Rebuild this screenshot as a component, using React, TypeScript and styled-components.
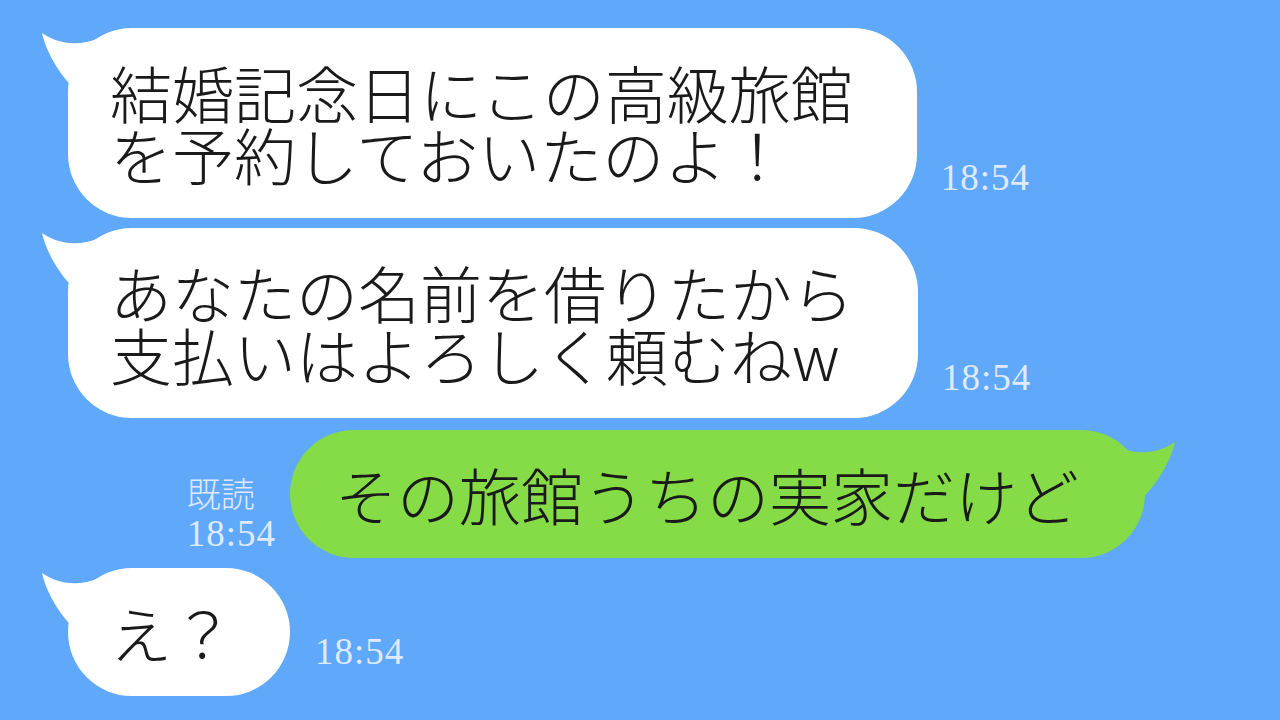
import styled, { createGlobalStyle } from "styled-components";

const GlobalStyle = createGlobalStyle`
  html, body {
    margin: 0;
    padding: 0;
    background: #5fa8fa;
  }
  body {
    font-family: "Noto Sans CJK JP", "Noto Sans", sans-serif;
  }
`;

const Screen = styled.div`
  width: 1280px;
  height: 720px;
  overflow: hidden;
  background: #5fa8fa;
  display: flex;
  flex-direction: column;
  padding-top: 28px;
  box-sizing: border-box;
`;

const Row = styled.div<{ $mine?: boolean; $gap: number }>`
  display: flex;
  align-items: flex-end;
  justify-content: ${({ $mine }) => ($mine ? "flex-end" : "flex-start")};
  padding: ${({ $mine }) => ($mine ? "0 135px 0 0" : "0 0 0 68px")};
  margin-bottom: ${({ $gap }) => $gap}px;
`;

const Bubble = styled.div<{ $mine?: boolean; $right: number }>`
  position: relative;
  background: ${({ $mine }) => ($mine ? "#86dc46" : "#ffffff")};
  color: #1a1a1a;
  border-radius: 64px;
  padding: 33px ${({ $right }) => $right}px 33px ${({ $mine }) => ($mine ? 45 : 42)}px;
  font-family: "Noto Sans CJK JP", "Noto Sans", sans-serif;
  font-weight: 300;
  font-size: 62px;
  line-height: 62px;
  white-space: pre;
`;

const Tail = styled.svg<{ $mine?: boolean }>`
  position: absolute;
  width: 70px;
  height: 80px;
  ${({ $mine }) =>
    $mine
      ? "top: 7px; right: -34px; transform: scaleX(-1);"
      : "top: 0; left: -30px;"}
`;

const Time = styled.div<{ $bottom: number; $left: number }>`
  font-family: "Liberation Serif", "DejaVu Serif", serif;
  font-size: 37px;
  line-height: 37px;
  letter-spacing: 1px;
  color: #dfeaff;
  margin: 0 0 ${({ $bottom }) => $bottom}px ${({ $left }) => $left}px;
`;

const Meta = styled.div`
  display: flex;
  flex-direction: column;
  align-items: flex-start;
  gap: 4px;
  margin: 0 14px 6px 0;
`;

const Read = styled.div`
  font-family: "Noto Sans CJK JP", sans-serif;
  font-size: 34px;
  line-height: 36px;
  color: #dfeaff;
  font-weight: 300;
`;

const MetaTime = styled.div`
  font-family: "Liberation Serif", "DejaVu Serif", serif;
  font-size: 37px;
  line-height: 37px;
  letter-spacing: 1px;
  color: #dfeaff;
`;

function BubbleTail({ mine, color }: { mine?: boolean; color: string }) {
  return (
    <Tail $mine={mine} viewBox="0 0 70 80" aria-hidden>
      <path
        d="M4 5 C17 14, 37 20, 62 10 L62 67 L40 64 C24 50, 9 27, 4 5 Z"
        fill={color}
      />
    </Tail>
  );
}

export default function App() {
  return (
    <>
      <GlobalStyle />
      <Screen>
        <Row $gap={10}>
          <Bubble $right={64}>
            <BubbleTail color="#ffffff" />
            {"結婚記念日にこの高級旅館\nを予約しておいたのよ！"}
          </Bubble>
          <Time $bottom={22} $left={24}>18:54</Time>
        </Row>
        <Row $gap={12}>
          <Bubble $right={64}>
            <BubbleTail color="#ffffff" />
            {"あなたの名前を借りたから\n支払いはよろしく頼むねw"}
          </Bubble>
          <Time $bottom={22} $left={24}>18:54</Time>
        </Row>
        <Row $mine $gap={10}>
          <Meta>
            <Read>既読</Read>
            <MetaTime>18:54</MetaTime>
          </Meta>
          <Bubble $mine $right={66}>
            <BubbleTail mine color="#86dc46" />
            その旅館うちの実家だけど
          </Bubble>
        </Row>
        <Row $gap={0}>
          <Bubble $right={56}>
            <BubbleTail color="#ffffff" />
            え？
          </Bubble>
          <Time $bottom={26} $left={25}>18:54</Time>
        </Row>
      </Screen>
    </>
  );
}
